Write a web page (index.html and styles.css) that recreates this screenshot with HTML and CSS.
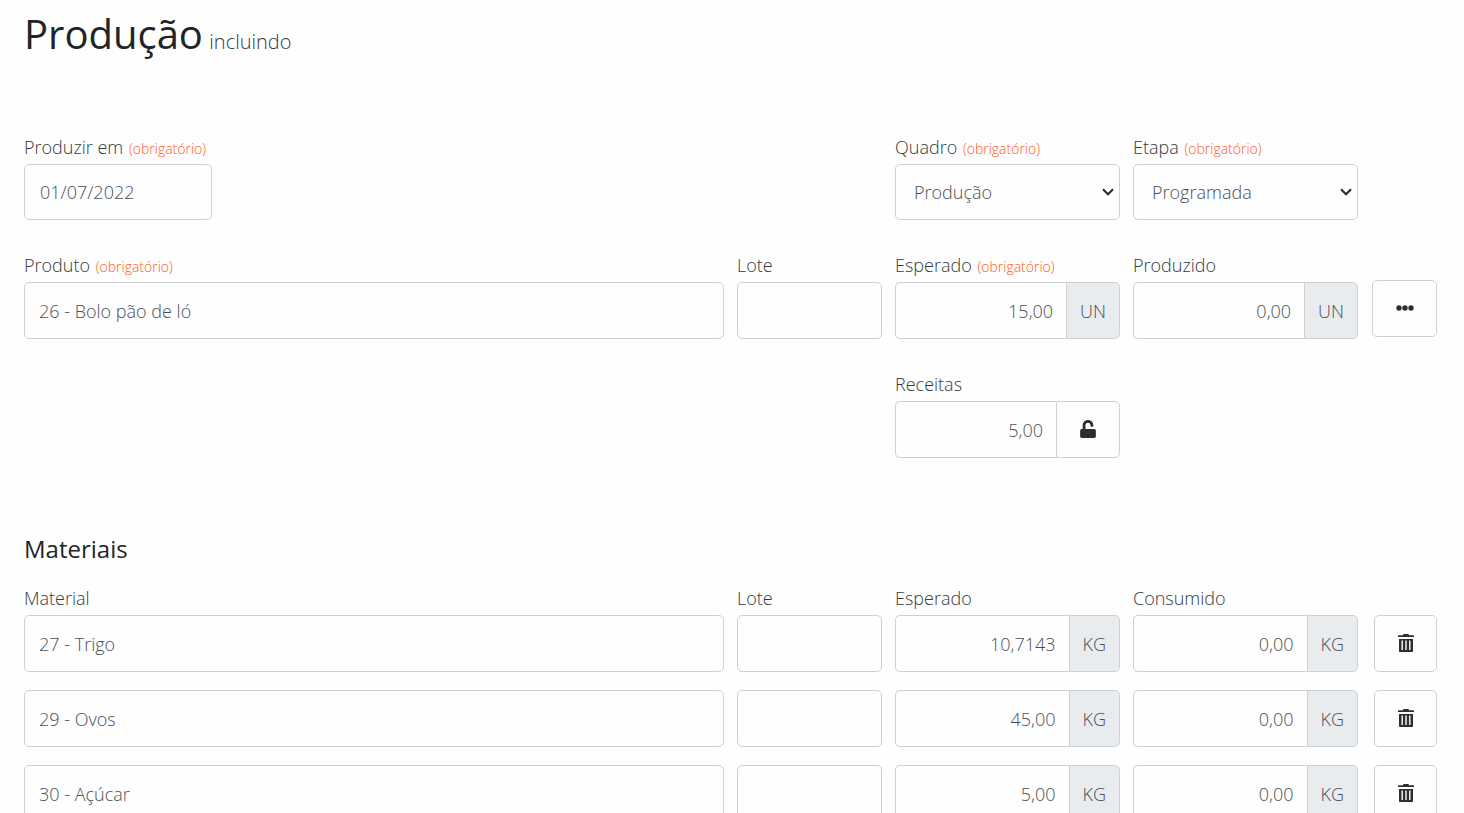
FILE: index.html
```
<!DOCTYPE html>
<html lang="pt-BR">
<head>
<meta charset="utf-8">
<meta name="viewport" content="width=device-width, initial-scale=1">
<title>Produção</title>
<link rel="stylesheet" href="styles.css">
</head>
<body>
<svg class="sprite" aria-hidden="true">
  <symbol id="trash" viewBox="0 0 16 18">
    <path fill-rule="evenodd" d="M5 1.2C5 .5 5.6 0 6.3 0h3.4C10.4 0 11 .5 11 1.2h4.4c.3 0 .6.3.6.6V3H0V1.800c0-.3.3-.6.6-.6zM1 5h14v12c0 .6-.4 1-1 1H2c-.6 0-1-.4-1-1zM3.500 6.500v9.500h1.400v-9.500zM7.300 6.500v9.500h1.400v-9.500zM11.100 6.500v9.500h1.400v-9.500z"/>
  </symbol>
  <symbol id="unlock" viewBox="0 0 448 512">
    <path d="M400 256H152V152.900c0-39.600 31.700-72.500 71.300-72.900 40-.4 72.700 32.100 72.700 72v16c0 13.300 10.700 24 24 24h32c13.300 0 24-10.700 24-24v-16C376 68 307.500-.3 223.500 0 139.500.3 72 69.500 72 153.500V256H48c-26.500 0-48 21.500-48 48v160c0 26.500 21.500 48 48 48h352c26.500 0 48-21.500 48-48V304c0-26.500-21.500-48-48-48z"/>
  </symbol>
  <symbol id="dots" viewBox="0 0 18 6">
    <circle cx="3" cy="3" r="2.700"/><circle cx="9" cy="3" r="2.700"/><circle cx="15" cy="3" r="2.700"/>
  </symbol>
</svg>
<main class="page">
  <h1 class="title">Produção <small class="title-state">incluindo</small></h1>
  <form class="form">
    <div class="row row-top">
      <div class="field field-date">
        <label class="label" for="data">Produzir em <span class="required">(obrigatório)</span></label>
        <input class="control control-date" id="data" type="text" value="01/07/2022">
      </div>
      <div class="field col-expected">
        <label class="label" for="quadro">Quadro <span class="required">(obrigatório)</span></label>
        <select class="control select" id="quadro"><option>Produção</option></select>
      </div>
      <div class="field col-done">
        <label class="label" for="etapa">Etapa <span class="required">(obrigatório)</span></label>
        <select class="control select" id="etapa"><option>Programada</option></select>
      </div>
    </div>
    <div class="row">
      <div class="field">
        <label class="label" for="produto">Produto <span class="required">(obrigatório)</span></label>
        <input class="control" id="produto" type="text" value="26 - Bolo pão de ló">
      </div>
      <div class="field">
        <label class="label" for="lote">Lote</label>
        <input class="control" id="lote" type="text">
      </div>
      <div class="field">
        <label class="label" for="esperado">Esperado <span class="required">(obrigatório)</span></label>
        <div class="group"><input class="control number" id="esperado" type="text" value="15,00"><span class="unit">UN</span></div>
      </div>
      <div class="field">
        <label class="label" for="produzido">Produzido</label>
        <div class="group"><input class="control number" id="produzido" type="text" value="0,00"><span class="unit">UN</span></div>
      </div>
      <div class="action action-more">
        <button class="button button-more" type="button" aria-label="Mais opções"><svg class="icon-dots"><use href="#dots"/></svg></button>
      </div>
    </div>
    <div class="row">
      <div class="field col-expected">
        <label class="label" for="receitas">Receitas</label>
        <div class="group"><input class="control number" id="receitas" type="text" value="5,00"><button class="button button-lock" type="button" aria-label="Desbloquear receitas"><svg class="icon-lock"><use href="#unlock"/></svg></button></div>
      </div>
    </div>

    <h2 class="subtitle">Materiais</h2>
    <div class="materials">
      <div class="row">
        <div class="field">
          <label class="label" for="m1">Material</label>
          <input class="control" id="m1" type="text" value="27 - Trigo">
        </div>
        <div class="field">
          <label class="label" for="l1">Lote</label>
          <input class="control" id="l1" type="text">
        </div>
        <div class="field">
          <label class="label" for="e1">Esperado</label>
          <div class="group"><input class="control number" id="e1" type="text" value="10,7143"><span class="unit">KG</span></div>
        </div>
        <div class="field">
          <label class="label" for="c1">Consumido</label>
          <div class="group"><input class="control number" id="c1" type="text" value="0,00"><span class="unit">KG</span></div>
        </div>
        <div class="action"><button class="button" type="button" aria-label="Excluir Trigo"><svg class="icon-trash"><use href="#trash"/></svg></button></div>
      </div>
      <div class="row">
        <input class="control" type="text" aria-label="Material" value="29 - Ovos">
        <input class="control" type="text" aria-label="Lote">
        <div class="group"><input class="control number" type="text" aria-label="Esperado" value="45,00"><span class="unit">KG</span></div>
        <div class="group"><input class="control number" type="text" aria-label="Consumido" value="0,00"><span class="unit">KG</span></div>
        <div class="action"><button class="button" type="button" aria-label="Excluir Ovos"><svg class="icon-trash"><use href="#trash"/></svg></button></div>
      </div>
      <div class="row">
        <input class="control" type="text" aria-label="Material" value="30 - Açúcar">
        <input class="control" type="text" aria-label="Lote">
        <div class="group"><input class="control number" type="text" aria-label="Esperado" value="5,00"><span class="unit">KG</span></div>
        <div class="group"><input class="control number" type="text" aria-label="Consumido" value="0,00"><span class="unit">KG</span></div>
        <div class="action"><button class="button" type="button" aria-label="Excluir Açúcar"><svg class="icon-trash"><use href="#trash"/></svg></button></div>
      </div>
    </div>
  </form>
</main>
</body>
</html>
```
FILE: styles.css
```
* {
  box-sizing: border-box;
}

body {
  margin: 0;
  background: #fefefe;
  color: #212529;
  font-family: "Open Sans", sans-serif;
  font-size: 18px;
  font-weight: 300;
}

.sprite {
  display: none;
}

.page {
  height: 100vh;
  overflow: auto;
  scrollbar-width: none;
  padding: 8px 27px 0 24px;
}

.title {
  margin: 0 0 67px;
  font-size: 40px;
  line-height: 52px;
  font-weight: 400;
}

.title-state {
  margin-left: -4px;
  color: #343a40;
  font-size: 20px;
  font-weight: 300;
}

.row {
  display: grid;
  grid-template-columns: 700fr 145fr 225fr 225fr 66fr;
  column-gap: 13px;
  margin-bottom: 33px;
}

.row > * {
  min-width: 0;
}

.col-expected {
  grid-column: 3;
}

.col-done {
  grid-column: 4;
}

.label {
  display: block;
  height: 25px;
  margin-bottom: 4px;
  color: #343a40;
  line-height: 24px;
  white-space: nowrap;
}

.required {
  margin-left: 1px;
  color: #ff5a26;
  font-size: 14px;
}

.control {
  display: block;
  width: 100%;
  min-width: 0;
  height: 57px;
  padding: 0 14px;
  border: 1px solid #ced0d2;
  border-radius: 5px;
  background: #fefefe;
  color: #495057;
  font: inherit;
}

.row-top .control {
  height: 56px;
}

.control-date {
  width: 188px;
  padding: 0 15px;
}

.select {
  appearance: none;
  padding: 0 24px 0 18px;
  background: #fefefe url("data:image/svg+xml,%3Csvg xmlns='http://www.w3.org/2000/svg' viewBox='0 0 12 8'%3E%3Cpath d='M1 1.200l5 5 5-5' fill='none' stroke='%232c2e30' stroke-width='2.200'/%3E%3C/svg%3E") no-repeat right 5px center / 12px 8px;
}

.group {
  display: flex;
}

.number {
  flex: 1;
  padding: 0 13px;
  border-right: 0;
  border-radius: 5px 0 0 5px;
  text-align: right;
}

.unit {
  display: flex;
  align-items: center;
  padding: 0 13px;
  border: 1px solid #ced0d2;
  border-radius: 0 5px 5px 0;
  background: #e9ecef;
  color: #495057;
}

.action {
  display: flex;
  align-items: flex-end;
  justify-content: flex-end;
}

.action-more {
  padding-bottom: 2px;
}

.button {
  display: flex;
  align-items: center;
  justify-content: center;
  width: 63px;
  height: 57px;
  padding: 0 0 2px;
  border: 1px solid #ced0d2;
  border-radius: 5px;
  background: #fefefe;
  color: #2c2e30;
  fill: currentColor;
}

.button-more {
  width: 65px;
}

.button-lock {
  width: 64px;
  border-radius: 0 5px 5px 0;
}

.icon-trash {
  width: 16px;
  height: 18px;
}

.icon-lock {
  width: 16px;
  height: 18px;
}

.icon-dots {
  width: 18px;
  height: 6px;
}

.subtitle {
  margin: 75px 0 21px;
  font-size: 24px;
  line-height: 32px;
  font-weight: 400;
}

.materials .row {
  margin-bottom: 18px;
}
```
